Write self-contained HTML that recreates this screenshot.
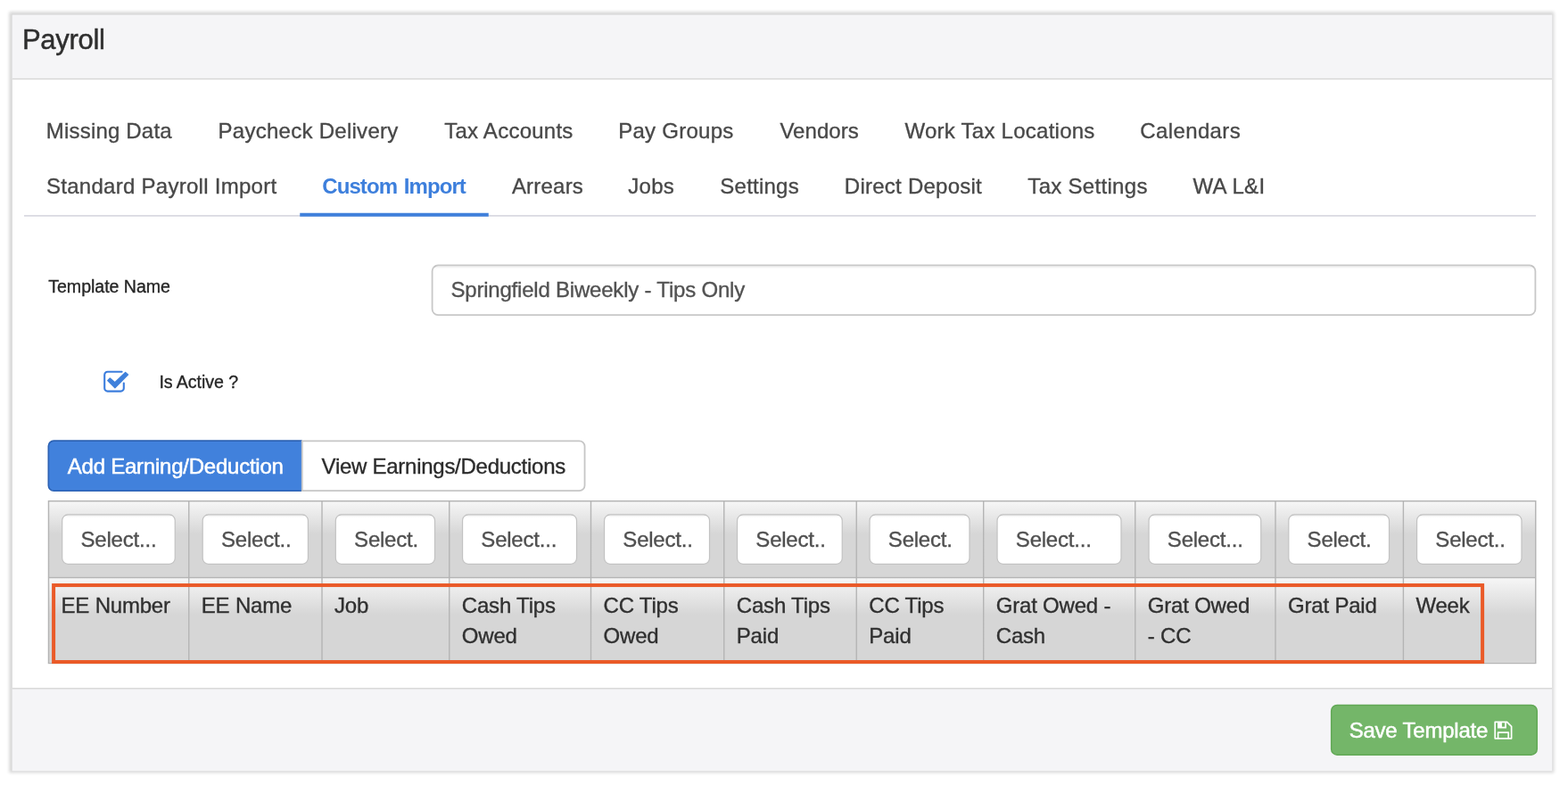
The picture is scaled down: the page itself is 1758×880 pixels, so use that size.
<!DOCTYPE html>
<html lang="en"><head><meta charset="utf-8"><title>Payroll</title>
<style>
*{box-sizing:border-box;margin:0;padding:0}
html,body{width:1758px;height:880px;overflow:hidden;background:#fff}
body{font-family:"Liberation Sans", Arial, Helvetica, sans-serif;color:#333;position:relative;will-change:transform}
.abs{position:absolute}
#bg{position:absolute;left:0;top:0}
.t{position:absolute;white-space:nowrap;line-height:34px;font-size:24px;-webkit-text-stroke:0.35px currentColor}
.panel{position:absolute;left:14px;top:17px;width:1726px;height:847px;background:#fff;box-shadow:-0.25px -0.25px 3.5px 3.5px rgba(0,0,0,.16)}
.title{font-weight:normal;-webkit-text-stroke-width:0.45px;font-size:31px;color:#2e2e2e;line-height:40px}
.tab{color:#484848}
.tab.on{color:#3d7fdc;font-weight:bold;-webkit-text-stroke:0}
.lbl{font-size:19.6px;color:#262626;line-height:28px}
.inptxt{color:#525252}
.sel{position:absolute;overflow:hidden;white-space:nowrap;font-size:24px;line-height:34px;height:34px;top:587.8px;color:#505050;-webkit-text-stroke:0.35px currentColor;letter-spacing:-0.22px}
.sel i{font-style:normal;letter-spacing:-0.1px}
.th{position:absolute;font-size:24px;line-height:33.75px;color:#303030;white-space:nowrap;-webkit-text-stroke:0.35px currentColor;letter-spacing:-0.2px}
</style></head>
<body>
<div class="panel"></div>
<svg id="bg" width="1758" height="880" viewBox="0 0 1758 880">
<defs>
<linearGradient id="cg" x1="0" y1="0" x2="0" y2="1"><stop offset="0" stop-color="#f6f6f6"/><stop offset="0.43" stop-color="#d6d6d6"/><stop offset="1" stop-color="#d6d6d6"/></linearGradient>
<linearGradient id="ig" x1="0" y1="0" x2="0" y2="1"><stop offset="0" stop-color="#000" stop-opacity="0.07"/><stop offset="1" stop-color="#000" stop-opacity="0"/></linearGradient>
</defs>
<rect x="13.80" y="16.80" width="1726.30" height="847.30" fill="#fff"/>
<rect x="13.80" y="16.80" width="1726.30" height="71.70" fill="#f5f5f7"/>
<rect x="13.80" y="87.80" width="1726.30" height="1.40" fill="#d6d6d6"/>
<rect x="13.80" y="771.70" width="1726.30" height="92.40" fill="#f5f5f7"/>
<rect x="13.80" y="771.10" width="1726.30" height="1.40" fill="#d6d6d6"/>
<rect x="27.00" y="241.10" width="1695.00" height="1.60" fill="#d6d6df"/>
<rect x="336.25" y="238.75" width="211.50" height="4.00" fill="#3f80db"/>
<rect x="484.60" y="297.40" width="1236.80" height="55.70" rx="6.5" fill="#fff" stroke="#c8c8c8" stroke-width="1.8"/>
<rect x="487" y="298.4" width="1232.7" height="3" fill="url(#ig)"/>
<path d="M338 494.10 H60.30 a6 6 0 0 0 -6 6 V544.20 a6 6 0 0 0 6 6 H338 Z" fill="#4181dc" stroke="#2b61b3" stroke-width="1.6"/>
<rect x="336.80" y="494.80" width="1.40" height="54.70" fill="#4181dc"/>
<path d="M338.75 494.35 H649.55 a6 6 0 0 1 6 6 V544.15 a6 6 0 0 1 -6 6 H338.75 Z" fill="#fff" stroke="#c6c6c6" stroke-width="1.8"/>
<rect x="53.75" y="561.00" width="1668.70" height="183.20" fill="#b4b4b4"/>
<rect x="55.20" y="562.45" width="155.85" height="84.40" fill="url(#cg)"/><rect x="55.20" y="648.25" width="155.85" height="94.75" fill="url(#cg)"/>
<rect x="212.45" y="562.45" width="147.85" height="84.40" fill="url(#cg)"/><rect x="212.45" y="648.25" width="147.85" height="94.75" fill="url(#cg)"/>
<rect x="361.70" y="562.45" width="141.35" height="84.40" fill="url(#cg)"/><rect x="361.70" y="648.25" width="141.35" height="94.75" fill="url(#cg)"/>
<rect x="504.45" y="562.45" width="157.35" height="84.40" fill="url(#cg)"/><rect x="504.45" y="648.25" width="157.35" height="94.75" fill="url(#cg)"/>
<rect x="663.20" y="562.45" width="147.85" height="84.40" fill="url(#cg)"/><rect x="663.20" y="648.25" width="147.85" height="94.75" fill="url(#cg)"/>
<rect x="812.45" y="562.45" width="147.10" height="84.40" fill="url(#cg)"/><rect x="812.45" y="648.25" width="147.10" height="94.75" fill="url(#cg)"/>
<rect x="960.95" y="562.45" width="141.05" height="84.40" fill="url(#cg)"/><rect x="960.95" y="648.25" width="141.05" height="94.75" fill="url(#cg)"/>
<rect x="1103.40" y="562.45" width="168.65" height="84.40" fill="url(#cg)"/><rect x="1103.40" y="648.25" width="168.65" height="94.75" fill="url(#cg)"/>
<rect x="1273.45" y="562.45" width="155.85" height="84.40" fill="url(#cg)"/><rect x="1273.45" y="648.25" width="155.85" height="94.75" fill="url(#cg)"/>
<rect x="1430.70" y="562.45" width="142.00" height="84.40" fill="url(#cg)"/><rect x="1430.70" y="648.25" width="142.00" height="94.75" fill="url(#cg)"/>
<rect x="1574.10" y="562.45" width="146.90" height="84.40" fill="url(#cg)"/><rect x="1574.10" y="648.25" width="146.90" height="94.75" fill="url(#cg)"/>
<rect x="69.70" y="576.90" width="126.55" height="55.40" rx="6.5" fill="#fff" stroke="#c2c2c2" stroke-width="1.2"/>
<rect x="73.40" y="577.5" width="118.85" height="2.5" fill="url(#ig)"/>
<rect x="227.20" y="576.90" width="118.20" height="55.40" rx="6.5" fill="#fff" stroke="#c2c2c2" stroke-width="1.2"/>
<rect x="230.90" y="577.5" width="110.50" height="2.5" fill="url(#ig)"/>
<rect x="376.30" y="576.90" width="111.20" height="55.40" rx="6.5" fill="#fff" stroke="#c2c2c2" stroke-width="1.2"/>
<rect x="380.00" y="577.5" width="103.50" height="2.5" fill="url(#ig)"/>
<rect x="518.55" y="576.90" width="127.95" height="55.40" rx="6.5" fill="#fff" stroke="#c2c2c2" stroke-width="1.2"/>
<rect x="522.25" y="577.5" width="120.25" height="2.5" fill="url(#ig)"/>
<rect x="677.55" y="576.90" width="117.95" height="55.40" rx="6.5" fill="#fff" stroke="#c2c2c2" stroke-width="1.2"/>
<rect x="681.25" y="577.5" width="110.25" height="2.5" fill="url(#ig)"/>
<rect x="826.55" y="576.90" width="117.70" height="55.40" rx="6.5" fill="#fff" stroke="#c2c2c2" stroke-width="1.2"/>
<rect x="830.25" y="577.5" width="110.00" height="2.5" fill="url(#ig)"/>
<rect x="975.05" y="576.90" width="111.95" height="55.40" rx="6.5" fill="#fff" stroke="#c2c2c2" stroke-width="1.2"/>
<rect x="978.75" y="577.5" width="104.25" height="2.5" fill="url(#ig)"/>
<rect x="1118.05" y="576.90" width="138.95" height="55.40" rx="6.5" fill="#fff" stroke="#c2c2c2" stroke-width="1.2"/>
<rect x="1121.75" y="577.5" width="131.25" height="2.5" fill="url(#ig)"/>
<rect x="1288.05" y="576.90" width="125.70" height="55.40" rx="6.5" fill="#fff" stroke="#c2c2c2" stroke-width="1.2"/>
<rect x="1291.75" y="577.5" width="118.00" height="2.5" fill="url(#ig)"/>
<rect x="1444.80" y="576.90" width="112.70" height="55.40" rx="6.5" fill="#fff" stroke="#c2c2c2" stroke-width="1.2"/>
<rect x="1448.50" y="577.5" width="105.00" height="2.5" fill="url(#ig)"/>
<rect x="1588.55" y="576.90" width="117.45" height="55.40" rx="6.5" fill="#fff" stroke="#c2c2c2" stroke-width="1.2"/>
<rect x="1592.25" y="577.5" width="109.75" height="2.5" fill="url(#ig)"/>
<rect x="60.10" y="656.05" width="1602.00" height="85.95" rx="0" fill="none" stroke="#ea5a28" stroke-width="4"/>
<rect x="1492.65" y="790.50" width="230.60" height="55.65" rx="6.5" fill="#74b669" stroke="#62a956" stroke-width="1.5"/>
</svg>
<h3 class="t title" id="title" style="left:24.98px;top:25.26px;letter-spacing:-0.291px;">Payroll</h3>
<nav>
<a class="t tab" id="tab1_0" style="left:51.82px;top:129.7px;letter-spacing:0.19px;">Missing Data</a>
<a class="t tab" id="tab1_1" style="left:244.55px;top:129.7px;letter-spacing:0.27px;">Paycheck Delivery</a>
<a class="t tab" id="tab1_2" style="left:498.16px;top:129.7px;letter-spacing:0.254px;">Tax Accounts</a>
<a class="t tab" id="tab1_3" style="left:693.2px;top:129.7px;letter-spacing:0.262px;">Pay Groups</a>
<a class="t tab" id="tab1_4" style="left:874.39px;top:129.7px;letter-spacing:0.062px;">Vendors</a>
<a class="t tab" id="tab1_5" style="left:1014.52px;top:129.7px;letter-spacing:0.253px;">Work Tax Locations</a>
<a class="t tab" id="tab1_6" style="left:1278.35px;top:129.7px;letter-spacing:0.37px;">Calendars</a>
<a class="t tab" id="tab2_0" style="left:51.9px;top:191.8px;letter-spacing:0.28px;">Standard Payroll Import</a>
<a class="t tab on" id="tab2_1" style="left:361.3px;top:191.8px;letter-spacing:-0.928px;word-spacing:2px;">Custom Import</a>
<a class="t tab" id="tab2_2" style="left:573.88px;top:191.8px;letter-spacing:0.214px;">Arrears</a>
<a class="t tab" id="tab2_3" style="left:704.16px;top:191.8px;letter-spacing:0.334px;">Jobs</a>
<a class="t tab" id="tab2_4" style="left:807.33px;top:191.8px;letter-spacing:0.235px;">Settings</a>
<a class="t tab" id="tab2_5" style="left:946.82px;top:191.8px;letter-spacing:0.248px;">Direct Deposit</a>
<a class="t tab" id="tab2_6" style="left:1152.33px;top:191.8px;letter-spacing:0.304px;">Tax Settings</a>
<a class="t tab" id="tab2_7" style="left:1337.56px;top:191.8px;letter-spacing:0.276px;">WA L&amp;I</a>
</nav>
<label class="t lbl" id="lbl1" style="left:54.25px;top:306.7px;letter-spacing:-0.04px;">Template Name</label>
<span class="t inptxt" id="inptxt" style="left:505.45px;top:308.2px;letter-spacing:-0.207px;">Springfield Biweekly - Tips Only</span>
<svg class="abs" style="left:114px;top:413px" width="32" height="30" viewBox="0 0 32 30">
<path d="M22.6 3.75 H6.6 A3.4 3.4 0 0 0 3.2 7.15 V22.2 A3.4 3.4 0 0 0 6.6 25.6 H21.4 A3.4 3.4 0 0 0 24.8 22.2 V16.6" fill="none" stroke="#3b7ddd" stroke-width="2.1" stroke-linecap="round"/>
<path d="M6.7 13.6 L9.3 10.9 L14.8 15.75 L26.6 4.55 L29.5 7.1 L14.9 21.8 Z" fill="#3f80db" stroke="#3f80db" stroke-width="1.3" stroke-linejoin="round"/>
</svg>
<label class="t lbl" id="lbl2" style="left:178.42px;top:413.8px;letter-spacing:-0.057px;">Is Active ?</label>
<span class="t " id="btnA" style="left:75.78px;top:505.6px;letter-spacing:-0.234px;color:#fff;-webkit-text-stroke-width:0.5px;">Add Earning/Deduction</span>
<span class="t " id="btnB" style="left:360.59px;top:505.6px;letter-spacing:-0.264px;color:#2b2b2b;">View Earnings/Deductions</span>
<div class="sel" id="sel_0" style="left:90.50px;width:86.25px">Select<i>...</i></div>
<div class="sel" id="sel_1" style="left:248.00px;width:77.90px">Select<i>...</i></div>
<div class="sel" id="sel_2" style="left:397.10px;width:70.90px">Select<i>...</i></div>
<div class="sel" id="sel_3" style="left:539.35px;width:87.65px">Select<i>...</i></div>
<div class="sel" id="sel_4" style="left:698.35px;width:77.65px">Select<i>...</i></div>
<div class="sel" id="sel_5" style="left:847.35px;width:77.40px">Select<i>...</i></div>
<div class="sel" id="sel_6" style="left:995.85px;width:71.65px">Select<i>...</i></div>
<div class="sel" id="sel_7" style="left:1138.85px;width:98.65px">Select<i>...</i></div>
<div class="sel" id="sel_8" style="left:1308.85px;width:85.40px">Select<i>...</i></div>
<div class="sel" id="sel_9" style="left:1465.60px;width:72.40px">Select<i>...</i></div>
<div class="sel" id="sel_10" style="left:1609.35px;width:77.15px">Select<i>...</i></div>
<div class="th" id="th_0" style="left:68.55px;top:661.95px">EE Number</div>
<div class="th" id="th_1" style="left:225.8px;top:661.95px">EE Name</div>
<div class="th" id="th_2" style="left:375.05px;top:661.95px">Job</div>
<div class="th" id="th_3" style="left:517.8px;top:661.95px">Cash Tips<br>Owed</div>
<div class="th" id="th_4" style="left:676.55px;top:661.95px">CC Tips<br>Owed</div>
<div class="th" id="th_5" style="left:825.8px;top:661.95px">Cash Tips<br>Paid</div>
<div class="th" id="th_6" style="left:974.3px;top:661.95px">CC Tips<br>Paid</div>
<div class="th" id="th_7" style="left:1116.75px;top:661.95px">Grat Owed -<br>Cash</div>
<div class="th" id="th_8" style="left:1286.8px;top:661.95px">Grat Owed<br>- CC</div>
<div class="th" id="th_9" style="left:1444.05px;top:661.95px">Grat Paid</div>
<div class="th" id="th_10" style="left:1587.45px;top:661.95px">Week</div>
<span class="t " id="save" style="left:1512.67px;top:802.2px;letter-spacing:-0.214px;color:#fff;-webkit-text-stroke-width:0.5px;">Save Template</span>
<svg class="abs" style="left:1674px;top:807px" width="24" height="24" viewBox="0 0 24 24">
<path d="M2.2 2.3 H15.6 L20.6 7.3 V20.8 H2.2 Z" fill="none" stroke="#fff" stroke-width="1.7" stroke-linejoin="round"/>
<path d="M5 2.6 H14.9 V9.5 H5 Z" fill="#fff"/>
<path d="M9.9 3.3 H13.1 V7.7 H9.9 Z" fill="#74b669"/>
<path d="M5.6 20.6 V14.1 H17.2 V20.6" fill="none" stroke="#fff" stroke-width="1.7" stroke-linejoin="round"/>
</svg>
</body></html>
